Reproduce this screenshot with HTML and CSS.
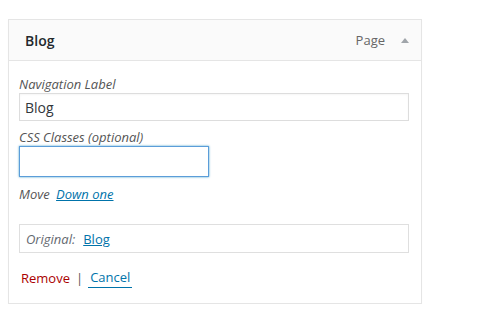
FILE: index.html
```html
<!DOCTYPE html>
<html lang="en">
<head>
  <meta charset="UTF-8" />
  <title>Menu Item</title>
  <link rel="stylesheet" href="styles.css">
</head>
<body>
  <div class="menu-item">
    <div class="item-bar">
      <span class="item-title">Blog</span>
      <span class="item-controls">
        <span class="item-type">Page</span>
        <span class="item-toggle"></span>
      </span>
    </div>

    <div class="item-settings">
      <label class="field-label">Navigation Label</label>
      <input type="text" class="field-wide" value="Blog" />

      <label class="field-label">CSS Classes (optional)</label>
      <input type="text" class="field-short focused" value="" />

      <div class="field-move">
        <span>Move</span>
        <a href="#">Down one</a>
      </div>

      <div class="link-original">
        <span>Original:</span>
        <a href="#">Blog</a>
      </div>

      <div class="item-actions">
        <a href="#" class="remove">Remove</a>
        <span class="sep">|</span>
        <a href="#" class="cancel">Cancel</a>
      </div>
    </div>
  </div>
</body>
</html>
```

FILE: styles.css
```css
body {
  margin: 0;
  padding: 19px 0 0 8px;
  background: #fff;
  font-family: 'Open Sans', sans-serif;
  color: #444;
  font-size: 13px;
}

.menu-item {
  width: 412px;
  border: 1px solid #e5e5e5;
  box-shadow: 0 1px 1px rgba(0, 0, 0, 0.04);
}

.item-bar {
  height: 40px;
  background: #fafafa;
  border-bottom: 1px solid #e5e5e5;
  display: flex;
  align-items: center;
  justify-content: space-between;
  padding: 0 0 0 16px;
}

.item-title {
  font-size: 14px;
  font-weight: 600;
  color: #23282d;
}

.item-controls {
  display: flex;
  align-items: center;
}

.item-type {
  color: #666;
  font-size: 13px;
}

.item-toggle {
  width: 0;
  height: 0;
  border-left: 4px solid transparent;
  border-right: 4px solid transparent;
  border-bottom: 5px solid #a0a5aa;
  margin: 0 12px 0 16px;
}

.item-settings {
  padding: 14px 11px 15px 10px;
}

.field-label {
  display: block;
  font-style: italic;
  color: #555;
  line-height: 18px;
}

input {
  display: block;
  box-sizing: border-box;
  font-family: 'Open Sans', sans-serif;
  font-size: 14px;
  color: #32373c;
  border: 1px solid #ddd;
  padding: 0 5px;
  margin: 0;
  background: #fff;
  box-shadow: inset 0 1px 2px rgba(0, 0, 0, 0.04);
  outline: none;
}

.field-wide {
  width: 390px;
  height: 28px;
  margin-bottom: 7px;
}

.field-short {
  width: 190px;
  height: 31px;
}

.focused {
  border-color: #5b9dd9;
  box-shadow: 0 0 2px rgba(30, 140, 190, 0.8);
}

.field-move {
  margin-top: 8px;
  font-style: italic;
  color: #555;
  line-height: 18px;
}

.field-move a {
  margin-left: 3px;
}

a {
  color: #0073aa;
  text-decoration: underline;
}

.link-original {
  margin-top: 21px;
  width: 390px;
  box-sizing: border-box;
  height: 29px;
  border: 1px solid #dfdfdf;
  padding: 0 6px;
  display: flex;
  align-items: center;
  color: #646970;
}

.link-original span {
  font-style: italic;
  margin-right: 8px;
}

.item-actions {
  margin-top: 15px;
  display: flex;
  align-items: center;
  line-height: 18px;
  padding-left: 2px;
}

.remove {
  color: #a00;
  text-decoration: none;
}

.sep {
  color: #555;
  margin: 0 5px 0 6px;
}

.cancel {
  text-decoration: none;
  border-bottom: 1px solid #0073aa;
  padding: 0 2px 1px;
}
```
